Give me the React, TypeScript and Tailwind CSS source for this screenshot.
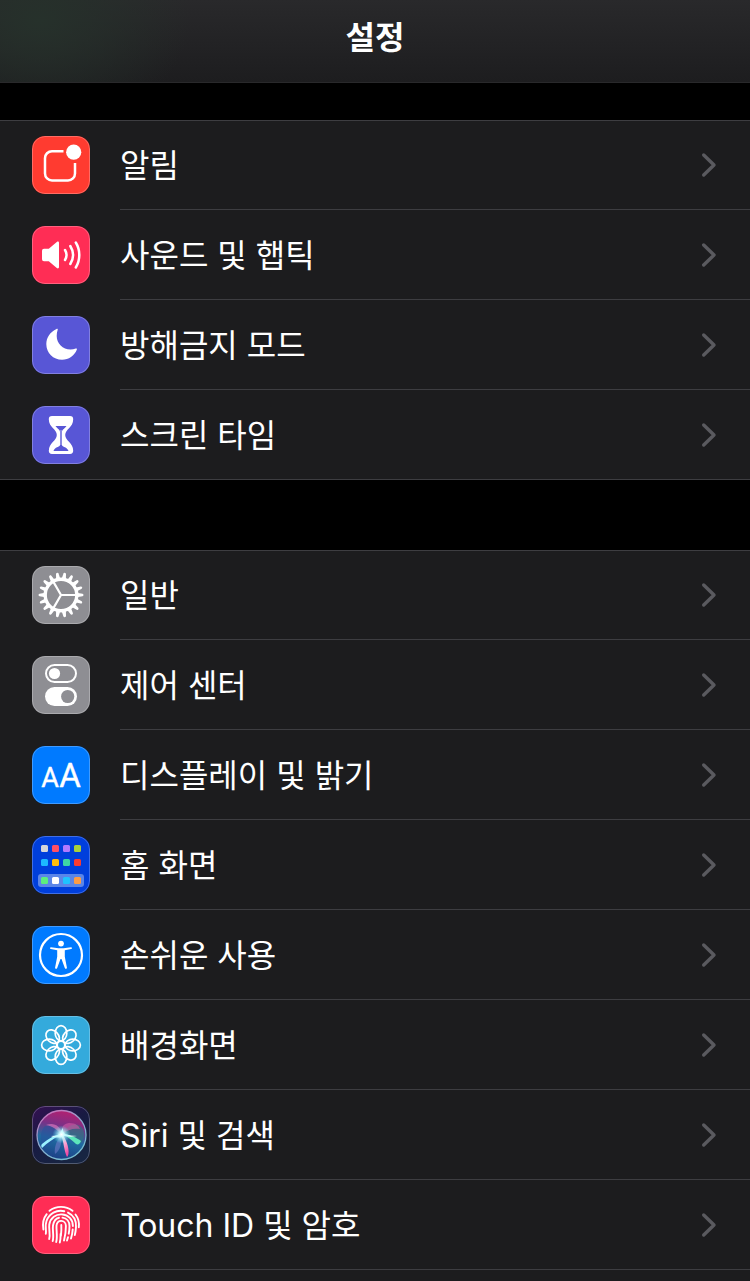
import type { ReactNode } from "react";

interface Setting {
  id: string;
  label: string;
  color: string;
  icon: ReactNode;
}

function NotificationIcon() {
  return (
    <>
      <path
        d="M31.5 15.2H20a7 7 0 0 0-7 7v15.300a7 7 0 0 0 7 7h16a7 7 0 0 0 7-7V27"
        fill="none"
        stroke="#fff"
        strokeWidth="2.5"
        strokeLinejoin="round"
      />
      <circle cx="41.7" cy="16.2" r="7.6" fill="#fff" />
    </>
  );
}

function SoundIcon() {
  return (
    <>
      <path
        d="M12 22.8h4.8l8-6.8c1-.8 2.200-.4 2.200.9v24.200c0 1.300-1.200 1.700-2.200.9l-8-6.800H12a2 2 0 0 1-2-2v-8.400a2 2 0 0 1 2-2z"
        fill="#fff"
      />
      <path
        d="M33 24a9.5 9.5 0 0 1 0 10M38.300 20a17 17 0 0 1 0 18M43.800 16.500a24 24 0 0 1 0 25"
        fill="none"
        stroke="#fff"
        strokeWidth="2.5"
        strokeLinecap="round"
      />
    </>
  );
}

function MoonIcon() {
  return (
    <path
      d="M25.700 13.800c.3-.9-.4-1.300-1.200-.9C18.200 15.800 14.300 21.400 14.300 28c0 9 7 15.800 15.800 15.800 6.600 0 12.300-4 14.700-10 .4-1-.2-1.500-1-1.200-1.700.6-3.500.8-5.300.8-7.800 0-13.800-5.700-13.800-13.400 0-2.200.3-4.300 1-6.200z"
      fill="#fff"
    />
  );
}

function HourglassIcon() {
  return (
    <>
      <path
        d="M20 10h18c2.200 0 3.200 1.200 3.200 3.200 0 8.300-8 9.800-8 15.800s8 7.500 8 15.800c0 2-1 3.200-3.200 3.200H20c-2.200 0-3.200-1.200-3.200-3.200 0-8.300 8-9.800 8-15.800s-8-7.500-8-15.800c0-2 1-3.200 3.200-3.200z"
        fill="#fff"
      />
      <path
        d="M23.500 20h11c-1.300 2.500-4.500 3.300-4.500 6v13c0 2 5.500 2 6.500 6h-15c1-4 6.500-4 6.500-6V26c0-2.700-3.200-3.500-4.500-6z"
        fill="#5856d6"
      />
      <path d="M29 24v15" stroke="#fff" strokeWidth="0.6" />
    </>
  );
}

function GearIcon() {
  const teeth = Array.from({ length: 18 }, (_, i) => i * 20);

  return (
    <>
      {teeth.map((angle) => (
        <path
          key={angle}
          d="M44.500 26.800l6 .9c.7.200 1 .6 1 1.300s-.3 1.100-1 1.300l-6 .9z"
          fill="#fff"
          transform={`rotate(${angle} 29 29)`}
        />
      ))}
      <circle cx="29" cy="29" r="15.8" fill="none" stroke="#fff" strokeWidth="3.4" />
      <path
        d="M29 29h14.500M29 29l-7.300-12.600M29 29l-7.300 12.600"
        stroke="#fff"
        strokeWidth="2.2"
      />
    </>
  );
}

function ControlIcon() {
  return (
    <>
      <rect x="14" y="9" width="30" height="17" rx="8.5" fill="none" stroke="#fff" strokeWidth="2" />
      <circle cx="22.5" cy="17.5" r="5.6" fill="#fff" />
      <rect x="13" y="31" width="32" height="19" rx="9.5" fill="#fff" />
      <circle cx="35.7" cy="40.5" r="6.6" fill="#8e8e93" />
    </>
  );
}

function DisplayIcon() {
  return (
    <g
      fill="#fff"
      stroke="#fff"
      strokeWidth="0.4"
      strokeLinejoin="round"
      fontFamily="Roboto, sans-serif"
      textAnchor="middle"
    >
      <text x="18" y="41" fontSize="27">
        A
      </text>
      <text x="38" y="41" fontSize="33">
        A
      </text>
    </g>
  );
}

const homeApps = [
  { y: 9, colors: ["#d6d6da", "#ff4f64", "#b279ff", "#a8d13b"] },
  { y: 23, colors: ["#1cb8ff", "#ffbe0a", "#3ed6a5", "#fb3b30"] },
  { y: 41, colors: ["#5cef7d", "#ffffff", "#1fc3ff", "#ff9c45"] },
];

function HomeIcon() {
  return (
    <>
      <rect x="6" y="38" width="46" height="13" rx="3" fill="#5b86e8" />
      {homeApps.map((row) =>
        row.colors.map((color, i) => (
          <rect key={color} x={9 + i * 11} y={row.y} width="7" height="7" rx="1.5" fill={color} />
        ))
      )}
    </>
  );
}

function AccessibilityIcon() {
  return (
    <>
      <circle cx="29" cy="29" r="21" fill="none" stroke="#fff" strokeWidth="2.2" />
      <circle cx="29" cy="17.6" r="2.9" fill="#fff" />
      <path
        d="M19 21.200l7.500 1h5l7.500-1c1.200 0 1.300 1.700.2 1.900l-6.400 1.200v6.500l2.100 10.800c.2 1.400-1.600 1.700-2.100.4L29.500 33h-1l-3.300 9c-.5 1.300-2.300 1-2.100-.4l2.100-10.800v-6.500l-6.400-1.200c-1.100-.2-1-1.900.2-1.900z"
        fill="#fff"
      />
    </>
  );
}

function WallpaperIcon() {
  const petals = Array.from({ length: 8 }, (_, i) => i * 45);

  return (
    <g fill="none" stroke="#fff" strokeWidth="1.7">
      {petals.map((angle) => (
        <ellipse
          key={angle}
          cx="29"
          cy="17.2"
          rx="5.8"
          ry="7.6"
          transform={`rotate(${angle} 29 29)`}
        />
      ))}
      <circle cx="29" cy="29" r="3.8" />
    </g>
  );
}

function SiriIcon() {
  return (
    <>
      <defs>
        <linearGradient id="siri-back" x1="0" y1="0" x2="0.6" y2="1">
          <stop offset="0" stopColor="#351052" />
          <stop offset="0.5" stopColor="#181a42" />
          <stop offset="1" stopColor="#172542" />
        </linearGradient>
        <linearGradient id="siri-orb" x1="0.6" y1="0" x2="0.4" y2="1">
          <stop offset="0" stopColor="#b5206f" />
          <stop offset="0.3" stopColor="#7d2f86" />
          <stop offset="0.6" stopColor="#1f6aa0" />
          <stop offset="1" stopColor="#1c3f86" />
        </linearGradient>
        <linearGradient id="siri-ring" x1="0" y1="0" x2="0.5" y2="1">
          <stop offset="0" stopColor="#d866b8" />
          <stop offset="0.5" stopColor="#8fa4cc" />
          <stop offset="1" stopColor="#76bcd0" />
        </linearGradient>
        <linearGradient id="siri-pink" x1="0" y1="0" x2="0.3" y2="1">
          <stop offset="0" stopColor="#ffffff" />
          <stop offset="1" stopColor="#f04aa4" />
        </linearGradient>
        <radialGradient id="siri-glow">
          <stop offset="0" stopColor="#ffffff" />
          <stop offset="0.3" stopColor="#c8fbff" stopOpacity="0.9" />
          <stop offset="1" stopColor="#59dff0" stopOpacity="0" />
        </radialGradient>
      </defs>
      <rect width="58" height="58" fill="url(#siri-back)" />
      <circle cx="29.5" cy="29" r="24.5" fill="url(#siri-orb)" stroke="url(#siri-ring)" strokeWidth="1.3" />
      <path d="M30 29C36 18 45 15 51 23c2 5 1 10-2 14-5-5-11-7-19-8z" fill="#2c7a80" opacity="0.6" />
      <path d="M30 29c-5-9-12-12-18-8-5 7-3 15-1 21 6-4 12-8 19-13z" fill="#26549c" opacity="0.6" />
      <path d="M30 29c-4-5-10-9-16-10 7-3 15 0 16 10z" fill="#ef7dc3" opacity="0.6" />
      <path d="M31 28c-3-6 0-10 6-11 7 0 10 3 11 6-7-1-13 1-17 5z" fill="#d45aa5" opacity="0.6" />
      <path d="M30 28c-8 4-15 9-20 14-1-2-1-3 0-4 6-5 12-9 20-10z" fill="#9af2ff" />
      <path d="M30 28c8 0 15 4 19 7-1 3-3 4-5 3-4-4-8-7-14-10z" fill="#5ce6bb" />
      <path d="M29 29c3 7 3 16 6 22 3-2 2-13-4-22z" fill="url(#siri-pink)" />
      <path d="M29 30c-5 5-7 12-6 18 5-4 7-10 6-18z" fill="#7b7fd0" opacity="0.5" />
      <path d="M19 30c4 0 7-1 9-2 1-3 2-5 3-6 0 3 0 4 2 6 4 1 8 2 12 2-5 1-9 1-13 0-4 2-8 2-13 0z" fill="#e8feff" />
      <circle cx="29.5" cy="28.5" r="9" fill="url(#siri-glow)" />
    </>
  );
}

function FingerprintIcon() {
  return (
    <path
      d="M17.500 14.800a19 19 0 0 1 23 0
        M14.700 18.200c-3.600 4.500-4.400 9.300-3.300 15.300
        M43.500 18.500c3 3.800 3.900 7.800 3.300 12.700
        M13.800 37.800c.9-3-1.300-7.400.7-12.800 2.600-7.500 10-11.500 17.800-9.800
        M36 16.600c5.600 2.700 8.500 8 8 14.700-.2 3-.5 5.200-1.200 7.700
        M17.200 43c1.400-4.500-.6-9.600.1-14.500 1.100-7 6.700-10.400 12.400-10.100 6.700.4 11.200 5 11.200 11.600
        M40.700 33.500c-.2 3.200-.8 6.200-1.700 9
        M20.700 45c1.500-5-.5-11 .3-15.500.7-4.500 3.500-7.300 6-7.800
        M30.500 21.600c4.200.6 7 4 7 8.400 0 2.700-.2 5.200-.8 7.700
        M36 41.200l-1 3.300
        M24.200 46c1.500-5 0-11.500.3-16.300.3-3 2.200-4.800 4.700-4.800s4.700 2 4.700 5.100c0 5-.6 9.700-1.900 14.500
        M27.800 46.500c.9-3.500.8-6 .8-8.500
        M29.300 29c.3 5-.1 8-.4 11"
      fill="none"
      stroke="#fff"
      strokeWidth="1.9"
      strokeLinecap="round"
    />
  );
}

const alertSettings: Setting[] = [
  { id: "notifications", label: "알림", color: "bg-[#ff3b30]", icon: <NotificationIcon /> },
  { id: "sounds", label: "사운드 및 햅틱", color: "bg-[#ff2d55]", icon: <SoundIcon /> },
  { id: "do-not-disturb", label: "방해금지 모드", color: "bg-[#5856d6]", icon: <MoonIcon /> },
  { id: "screen-time", label: "스크린 타임", color: "bg-[#5856d6]", icon: <HourglassIcon /> },
];

const deviceSettings: Setting[] = [
  { id: "general", label: "일반", color: "bg-[#8e8e93]", icon: <GearIcon /> },
  { id: "control-center", label: "제어 센터", color: "bg-[#8e8e93]", icon: <ControlIcon /> },
  { id: "display", label: "디스플레이 및 밝기", color: "bg-[#007aff]", icon: <DisplayIcon /> },
  { id: "home-screen", label: "홈 화면", color: "bg-[#003fdc]", icon: <HomeIcon /> },
  { id: "accessibility", label: "손쉬운 사용", color: "bg-[#007aff]", icon: <AccessibilityIcon /> },
  { id: "wallpaper", label: "배경화면", color: "bg-[#34aadc]", icon: <WallpaperIcon /> },
  { id: "siri", label: "Siri 및 검색", color: "bg-[#181a42]", icon: <SiriIcon /> },
  { id: "touch-id", label: "Touch ID 및 암호", color: "bg-[#ff2d55]", icon: <FingerprintIcon /> },
];

function SettingRow({ setting, isLast }: { setting: Setting; isLast: boolean }) {
  return (
    <li
      className={`flex h-[90px] first:h-[89px] ${isLast ? "border-b border-[#3d3d41]" : ""}`}
    >
      <a href={`#${setting.id}`} className="flex flex-1 items-end pl-8">
        <span
          className={`mr-[30px] size-[58px] shrink-0 overflow-hidden rounded-[13px] ${setting.color} ${isLast ? "mb-[15px]" : "mb-4"}`}
        >
          <svg viewBox="0 0 58 58" className="size-full" aria-hidden="true">
            {setting.icon}
            <rect
              x="0.5"
              y="0.5"
              width="57"
              height="57"
              rx="12.5"
              fill="none"
              stroke="#fff"
              strokeOpacity="0.25"
            />
          </svg>
        </span>
        <span
          className={`flex h-full flex-1 items-center justify-between pr-8 ${isLast ? "" : "border-b border-[#3d3d41]"}`}
        >
          <span className="pt-0.5 text-[32px] leading-10">{setting.label}</span>
          <svg
            viewBox="0 0 18 28"
            className="h-7 w-[18px] shrink-0"
            fill="none"
            stroke="#5a5a5f"
            strokeWidth="3.4"
            strokeLinecap="round"
            strokeLinejoin="round"
            aria-hidden="true"
          >
            <path d="M3.700 4l10.300 10L3.700 24" />
          </svg>
        </span>
      </a>
    </li>
  );
}

// an open list runs on past the bottom of the window
function SettingList({ settings, open = false }: { settings: Setting[]; open?: boolean }) {
  return (
    <ul className={`border-t border-[#3d3d41] bg-[#1c1c1e] ${open ? "flex-1" : ""}`}>
      {settings.map((setting, i) => (
        <SettingRow
          key={setting.id}
          setting={setting}
          isLast={!open && i === settings.length - 1}
        />
      ))}
    </ul>
  );
}

export default function App() {
  return (
    <div className="flex min-h-screen flex-col bg-black font-['Inter','Noto_Sans_CJK_KR',sans-serif] text-white">
      <header className="flex h-[83px] items-center justify-center border-b border-[#29292b] bg-[radial-gradient(ellipse_150px_110px_at_40px_20px,#26312b,transparent),linear-gradient(#29292b,#1d1d1f)] pb-1.5">
        <h1 className="text-[32px] leading-10 font-semibold">설정</h1>
      </header>
      <main className="flex flex-1 flex-col gap-[70px] pt-[37px]">
        <SettingList settings={alertSettings} />
        <SettingList settings={deviceSettings} open />
      </main>
    </div>
  );
}
